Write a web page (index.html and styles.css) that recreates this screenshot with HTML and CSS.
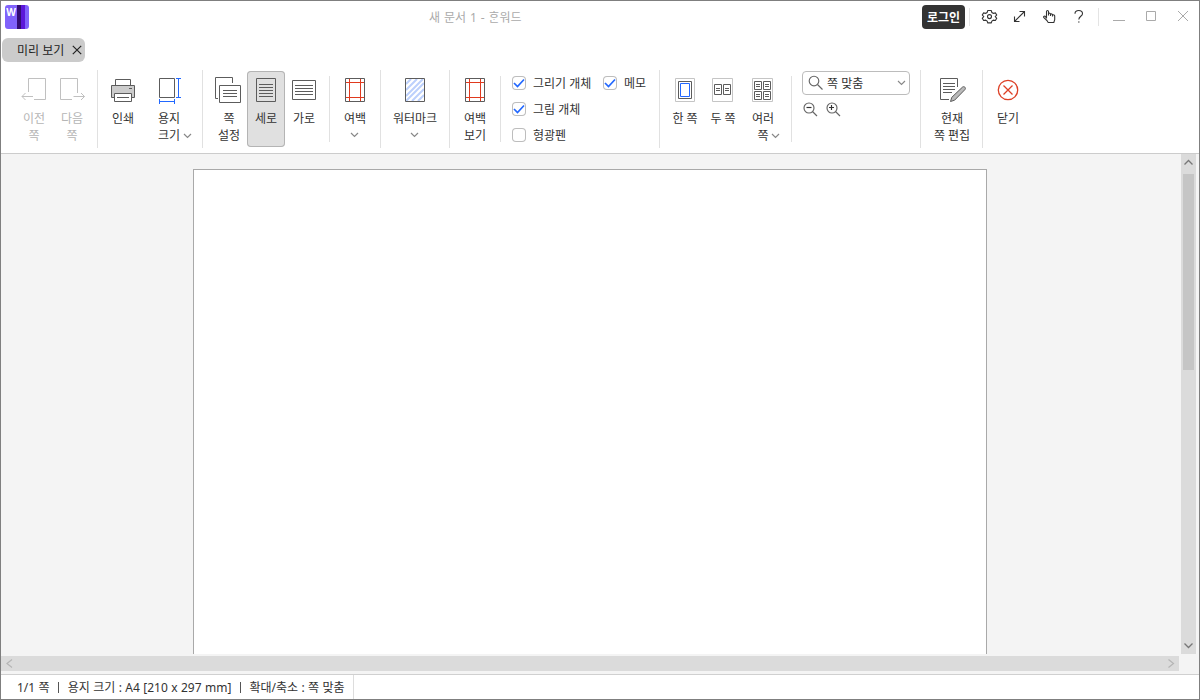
FILE: index.html
```
<!DOCTYPE html>
<html lang="ko">
<head>
<meta charset="utf-8">
<title>새 문서 1</title>
<link rel="stylesheet" href="styles.css">
</head>
<body>
<div class="window">
  <header class="titlebar">
    <svg class="logo" width="24" height="24"><defs><clipPath id="r"><rect width="24" height="24" rx="3"/></clipPath></defs><g clip-path="url(#r)"><path fill="#8062fb" d="M0 0h24v24H0z"/><path fill="#330c72" d="M12 0h4v24h-4z"/><path fill="#5b17d9" d="M16 0h4v24h-4z"/></g><text class="logo-text" x="1.2" y="10.5">W</text></svg>
    <div class="doc-title">새 문서 1 - ᄒᆞᆫ워드</div>
    <div class="title-actions">
      <button class="login">로그인</button>
      <svg width="230" height="34" viewBox="966 0 230 34">
        <path class="rule" d="M969.5 8v18M1098.5 8v18"/>
        <g class="ti">
          <path d="M987.8 10.5h3.4l.7 2 1.5.8 2-.4 1.3 2.1-1.4 1.6 1.4 1.7-1.3 2.2-2-.4-1.5.9-.7 1.9h-3.400l-.7-1.900-1.500-.9-2 .4-1.300-2.200 1.400-1.700-1.400-1.600 1.300-2.100 2 .4 1.500-.8z"/><circle cx="989.5" cy="16.600" r="2"/>
          <path d="M1014.5 21.500l10-10M1019.500 11.500h5v5M1014.500 16.500v5h5"/>
          <path d="M1046.500 18.500v-7c0-1.400 2-1.400 2 0v4M1048.500 15.500v-2c.8-.7 2-.3 2 .6v1.900M1050.500 14.200c.8-.6 2-.3 2 .6v1.700M1052.500 15c1-.5 2.200 0 2.200 1v3.500c0 1.200-.9 2-.9 3h-5.600c-.3-1.400-2-2.800-3.100-3.700l-1.400-1.400c-.6-.9.5-1.600 1.400-1.100l1.400 1.500"/>
          <path d="M1075 13.700c0-4.300 7.500-4.300 7.500 0 0 2.500-3.700 2.700-3.700 5.700"/><path d="M1078.100 22h1.400"/>
        </g>
        <g class="win"><path d="M1113 20.500h12"/><path d="M1146.500 11.500h9v9h-9z"/><path d="M1178 11l10 10M1188 11l-10 10"/></g>
      </svg>
    </div>
  </header>

  <nav class="tabs"><div class="tab"><span>미리 보기</span><svg width="10" height="10"><path d="M.8.8l8.4 8.400M9.200.8L.8 9.200"/></svg></div></nav>

  <section class="ribbon">
    <div class="group g-nav">
      <div role="button" class="tool disabled"><svg viewBox="15 71 38 38"><path d="M28.500 92V78.500h17v21H34M22 96.500H33M25.500 93l-3.500 3.500 3.500 3.500"/></svg>이전<br>쪽</div>
      <div role="button" class="tool disabled"><svg viewBox="53 71 38 38"><path d="M77.500 93V78.500h-17v21H72M73.500 96.500H84.500M81 93l3.500 3.500-3.500 3.500"/></svg>다음<br>쪽</div>
    </div>
    <div class="group g-print">
      <div role="button" class="tool"><svg viewBox="104 71 38 38"><path d="M115.500 85.500v-6h15v6"/><path fill="#ccc" d="M111.500 85.500h23v12h-23z"/><path fill="#fff" d="M114.500 93.500h17v8h-17z"/><path d="M117 97.500h12M129 88.500h3"/></svg>인쇄</div>
      <div role="button" class="tool"><svg viewBox="150 71 38 38"><path d="M159.500 78.500h15v19h-15z"/><path class="blue" d="M176 78.500h5M176 97.500h5M178.500 78.500v19M159.500 99v5M174.500 99v5M159.500 101.500h15"/></svg>용지<br><span class="more">크기<svg class="chev" width="9" height="6"><path d="M1 1l3.500 3.500L8 1"/></svg></span></div>
    </div>
    <div class="group short g-orient">
      <div role="button" class="tool"><svg viewBox="210 71 38 38"><path d="M218 98.500h-2.500v-21h17V83"/><path d="M219.500 85.500h21v17h-21zM223 90.500h14M223 93.500h14M223 96.500h14"/></svg>쪽<br>설정</div>
      <div role="button" class="tool selected"><svg viewBox="247 71 38 38"><path d="M256.500 78.500h19v23h-19zM259 84.500h14M259 87.500h14M259 90.500h14M259 93.500h14M259 96.500h14"/></svg>세로</div>
      <div role="button" class="tool"><svg viewBox="285 71 38 38"><path d="M292.500 80.500h23v19h-23zM295 85.500h18M295 88.500h18M295 91.500h18M295 94.500h18"/></svg>가로</div>
    </div>
    <div class="group g-margin">
      <div role="button" class="tool"><svg viewBox="336 71 38 38"><path d="M345.500 78.500h19v23h-19z"/><path class="red" d="M349.500 79v22M360.500 79v22M346 82.500h18M346 97.500h18"/></svg>여백<svg class="chev below" width="9" height="6"><path d="M1 1l3.500 3.500L8 1"/></svg></div>
    </div>
    <div class="group g-mark">
      <div role="button" class="tool wide"><svg viewBox="396 71 38 38"><path class="stripe" d="M406 84l5-5M406 90l11-11M406 96l17-17M406 101l18-18M412 101l12-12M418 101l6-6"/><path d="M405.500 78.500h19v23h-19z"/></svg>워터마크<svg class="chev below" width="9" height="6"><path d="M1 1l3.500 3.500L8 1"/></svg></div>
    </div>
    <div class="group short g-view">
      <div role="button" class="tool"><svg viewBox="456 71 38 38"><path d="M465.500 78.500h19v23h-19z"/><path class="red" d="M469.500 79v22M480.500 79v22M466 82.500h18M466 97.500h18"/></svg>여백<br>보기</div>
    </div>
    <div class="group g-check">
      <label class="check on"><i><svg width="14" height="14"><path d="M2 7l3.500 3.500 6.500-7"/></svg></i>그리기 개체</label>
      <label class="check on"><i><svg width="14" height="14"><path d="M2 7l3.500 3.500 6.500-7"/></svg></i>메모</label>
      <label class="check on"><i><svg width="14" height="14"><path d="M2 7l3.500 3.500 6.500-7"/></svg></i>그림 개체</label>
      <label class="check off"><i></i>형광펜</label>
    </div>
    <div class="group short g-pages">
      <div role="button" class="tool"><svg viewBox="666 71 38 38"><path class="pale" d="M675.500 78.500h19v23h-19z"/><path d="M678.500 81.500h13v17h-13z"/><path class="blue" d="M680.500 83.500h9v13h-9z"/></svg>한 쪽</div>
      <div role="button" class="tool"><svg viewBox="704 71 38 38"><path class="pale" d="M712.500 78.500h20v23h-20z"/><path d="M714.500 84.500h7v10h-7zM723.500 84.500h7v10h-7zM716 88.500h4M716 90.500h4M725 88.500h4M725 90.500h4"/></svg>두 쪽</div>
      <div role="button" class="tool"><svg viewBox="744 71 38 38"><path class="pale" d="M752.500 78.500h20v23h-20z"/><path d="M754.500 81.500h7v8h-7zM763.500 81.500h7v8h-7zM754.500 91.500h7v8h-7zM763.500 91.500h7v8h-7zM756 84.500h4M756 86.500h4M765 84.500h4M765 86.500h4M756 94.500h4M756 96.500h4M765 94.500h4M765 96.500h4"/></svg>여러<br><span class="more">쪽<svg class="chev" width="9" height="6"><path d="M1 1l3.500 3.500L8 1"/></svg></span></div>
    </div>
    <div class="group g-zoom">
      <div class="combo"><svg width="16" height="16"><circle cx="6" cy="6" r="4.800"/><path d="M9.500 9.500l5 5"/></svg><span>쪽 맞춤</span><svg class="chev" width="9" height="6"><path d="M1 1l3.500 3.500L8 1"/></svg></div>
      <div class="zooms">
        <svg width="15" height="15"><circle cx="6" cy="6" r="5"/><path d="M9.500 9.500l4.500 4.500"/><path class="dark" d="M3.500 5.500h5"/></svg>
        <svg width="15" height="15"><circle cx="6" cy="6" r="5"/><path d="M9.500 9.500l4.500 4.500"/><path class="dark" d="M3 5.500h5M5.500 3v5"/></svg>
      </div>
    </div>
    <div class="group g-edit">
      <div role="button" class="tool"><svg viewBox="933 71 38 38"><path d="M957.500 87v-8.500h-17v21H949M943 83.500h12M943 86.500h12M943 89.500h12M943 92.500h9"/><path fill="#bbb" d="M950.500 101.500l1.300-4.200 10.700-10.200c1.700-1.300 3.800.7 2.500 2.400l-10.400 10.700z"/></svg>현재<br>쪽 편집</div>
    </div>
    <div class="group g-close">
      <div role="button" class="tool"><svg viewBox="989 71 38 38"><g class="close"><circle cx="1008" cy="90" r="9.700"/><path d="M1003.500 85.500l9 9M1012.500 85.500l-9 9"/></g></svg>닫기</div>
    </div>
  </section>

  <main class="work">
    <div class="canvas"><div class="paper"></div></div>
    <div class="vscroll"><svg width="15" height="17"><path d="M3.500 10.500l4-4 4 4"/></svg><div class="thumb"></div><svg width="15" height="17"><path d="M3.500 6.500l4 4 4-4"/></svg></div>
    <div class="hscroll"><svg width="17" height="15"><path d="M11 3.500l-5 4 5 4"/></svg><svg width="17" height="15"><path d="M6.500 3.500l5 4-5 4"/></svg></div>
  </main>

  <footer class="status"><div class="status-text"><span>1/1 쪽</span><i></i><span>용지 크기 : A4 [210 x 297 mm]</span><i></i><span>확대/축소 : 쪽 맞춤</span></div></footer>
</div>
</body>
</html>
```
FILE: styles.css
```
* { box-sizing: border-box; }
body { margin: 0; font: 12px/17px "Noto Sans", "Noto Sans CJK KR", sans-serif; color: #333; background: #fff; }
svg { display: block; fill: none; flex: none; }
button { border: 0; padding: 0; margin: 0; background: none; font: inherit; color: inherit; }
.window { width: 1200px; height: 700px; border: 1px solid #7f7f7f; display: flex; flex-direction: column; overflow: hidden; }

.titlebar { height: 37px; display: grid; grid-template-columns: 422px 1fr auto; padding: 0 3px 0 4px; flex: none; }
.logo { margin-top: 4px; }
.logo-text { font: bold 10px "Noto Sans", sans-serif; fill: #fff; }
.doc-title { padding: 8px 0 0 2px; color: #aaa; word-spacing: 0.8px; white-space: nowrap; }
.title-actions { display: flex; gap: 1px; align-items: flex-start; }
.title-actions > svg { margin-top: -1px; }
.login { width: 43px; height: 24px; margin-top: 4px; border-radius: 4px; background: #333; color: #fff; font-weight: 700; }
.rule { stroke: #e4e4e4; }
.ti { stroke: #333; stroke-width: 1.1; }
.win { stroke: #aaa; }

.tabs { height: 25px; padding-left: 1px; flex: none; }
.tab { width: 83px; height: 24px; border-radius: 6px; background: #cbcbcb; display: flex; align-items: center; justify-content: space-between; padding: 0 3px 0 15px; color: #222; }
.tab svg { stroke: #222; stroke-width: 1.2; }

.ribbon { height: 91px; flex: none; display: flex; border-bottom: 1px solid #ccc; }
.group { height: 78px; margin-top: 7px; padding-top: 1px; display: flex; flex: none; border-right: 1px solid #e1e1e1; }
.group.short { border-right: 0; background: linear-gradient(#e1e1e1, #e1e1e1) right 6px / 1px 66px no-repeat; }
.tool { width: 38px; height: 76px; flex: none; display: flow-root; border-radius: 4px; text-align: center; line-height: 17px; white-space: nowrap; }
.tool > svg:first-child { width: 38px; height: 38px; margin-bottom: 1px; stroke: #5c5c5c; }
.tool.disabled { color: #b5b5b5; }
.tool.disabled > svg:first-child { stroke: #c0c0c0; }
.tool.selected { background: #e0e0e0; box-shadow: inset 0 0 0 1px #b4b4b4; }
.tool.wide { width: 50px; }
.tool.wide > svg:first-child { margin: 0 auto 1px; }
.blue { stroke: #2268ff; }
.red { stroke: #e03a1e; }
.pale { stroke: #c5c5c5; }
.stripe { stroke: #bcd0fc; stroke-width: 2; }
.close { stroke: #dd4026; stroke-width: 1.3; }
.chev { stroke: #888; stroke-width: 1.2; }
.chev.below { margin: 5px auto 0 14px; }
.wide .chev.below { margin-left: 20px; }
.more { position: relative; }
.more .chev { position: absolute; left: calc(100% + 2.5px); top: 6px; }
.g-nav { width: 97px; padding-left: 14px; }
.g-print { width: 105px; padding-left: 6px; gap: 8px; }
.g-orient { width: 127px; padding-left: 6px; }
.g-orient .tool:first-child { margin-left: 1px; margin-right: -1px; }
.g-margin { width: 51px; padding-left: 6px; }
.g-mark { width: 69px; padding-left: 9px; }
.g-view { width: 51px; padding-left: 6px; }
.g-check { width: 159px; padding: 0 0 0 11px; display: grid; grid-template-columns: 91px 1fr; grid-template-rows: repeat(3, 26px); }
.check { display: flex; align-items: center; gap: 7px; white-space: nowrap; }
.check:nth-child(n+3) { grid-column: 1; }
.check i { width: 14px; height: 14px; border-radius: 4px; box-shadow: inset 0 0 0 1px #bdbdbd; }
.check svg { stroke: #2268ff; stroke-width: 1.7; }
.g-pages { width: 132px; padding-left: 6px; }
.g-pages .tool:last-child { margin-left: 2px; }
.g-zoom { width: 129px; padding-left: 10px; flex-direction: column; gap: 7px; }
.combo { width: 108px; height: 24px; border: 1px solid #bcbcbc; border-radius: 4px; display: flex; align-items: center; padding: 0 3px 0 5px; }
.combo span { flex: 1; padding-left: 3px; }
.combo svg, .zooms svg { stroke: #666; stroke-width: 1.15; }
.combo .chev { stroke: #888; }
.zooms { display: flex; gap: 8px; padding-left: 0.5px; }
.zooms .dark { stroke: #333; }
.g-edit { width: 62px; padding-left: 12px; }
.g-close { border: 0; padding-left: 6px; }

.work { flex: 1; min-height: 0; display: grid; grid-template-columns: 1178px 17px; grid-template-rows: 500px 20px; column-gap: 2px; background: #f4f4f4; }
.canvas { overflow: hidden; padding: 15px 0 0 192px; }
.paper { width: 794px; height: 1123px; border: 1px solid #a9a9a9; background: #fff; }
.vscroll { width: 15px; background: #dbdbdb; display: flex; flex-direction: column; align-items: center; }
.vscroll svg { stroke: #777; stroke-width: 1.3; }
.vscroll .thumb { width: 11px; height: 196px; margin: 3px 0 auto; background: #c5c5c5; }
.hscroll { height: 15px; margin-top: 2px; background: #dbdbdb; display: flex; justify-content: space-between; }
.hscroll svg { stroke: #b5b5b5; stroke-width: 1.2; }

.status { height: 25px; flex: none; border-top: 1px solid #d0d0d0; background: #fff; }
.status-text { width: 353px; height: 24px; padding-left: 16px; border-right: 1px solid #ddd; display: flex; align-items: center; word-spacing: 0.3px; white-space: nowrap; }
.status-text i { width: 1px; height: 11px; margin: 0 8.5px; background: #555; }
```
